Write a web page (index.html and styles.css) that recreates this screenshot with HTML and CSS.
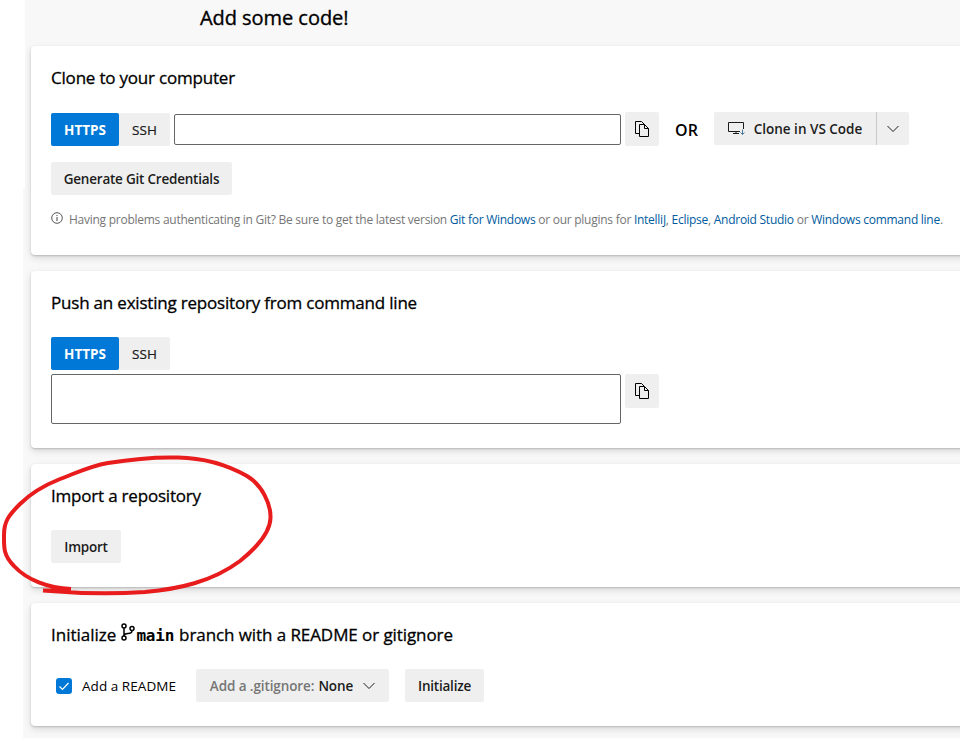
FILE: index.html
```html
<!DOCTYPE html>
<html lang="en">
<head>
<meta charset="utf-8">
<title>Add some code!</title>
<link rel="stylesheet" href="styles.css">
</head>
<body>
<svg class="defs" width="0" height="0">
  <symbol id="copy" viewBox="0 0 16 16"><path d="M5 12.500H1.500V.5h6l3 3M5.500 3.500h5l4 4v8h-9zM10.500 3.500v4h4" fill="none" stroke="currentColor" stroke-width="1"/></symbol>
  <symbol id="chevron" viewBox="0 0 12 8"><path d="M.5 1l5.500 5.500L11.500 1" fill="none" stroke="currentColor" stroke-width="1"/></symbol>
</svg>
<main class="page">
  <h1 class="title"><span>Add some code!</span></h1>
  <section class="card clone">
    <h2><span>Clone to your computer</span></h2>
    <div class="row">
      <div class="toggle"><button class="on">HTTPS</button><button>SSH</button></div>
      <div class="field"></div>
      <button class="btn copy" aria-label="Copy"><svg width="16" height="16"><use href="#copy"/></svg></button>
      <strong class="or">OR</strong>
      <div class="split">
        <button class="btn vs"><svg width="17" height="14" viewBox="0 0 17 14" fill="none" stroke="currentColor"><path d="M12 9.500H.5v-9h15V7M5 11.500h6M8 9.500v2"/><path class="arrow" d="M14.500 7.500v5M12.500 10.500l2 2 2-2"/></svg><span>Clone in VS Code</span></button>
        <button class="btn more" aria-label="More"><svg width="12" height="8"><use href="#chevron"/></svg></button>
      </div>
    </div>
    <button class="btn generate">Generate Git Credentials</button>
    <p class="hint"><svg width="12" height="12" viewBox="0 0 12 12" fill="none" stroke="currentColor"><circle cx="6" cy="6" r="5.300" stroke-width=".9"/><path d="M6 5v4M6 3v1"/></svg><span>Having problems authenticating in Git? Be sure to get the latest version <a>Git for Windows</a> or our plugins for <a>IntelliJ</a>, <a>Eclipse</a>, <a>Android Studio</a> or <a>Windows command line</a>.</span></p>
  </section>
  <section class="card push">
    <h2><span>Push an existing repository from command line</span></h2>
    <div class="toggle"><button class="on">HTTPS</button><button>SSH</button></div>
    <div class="row">
      <div class="field tall"></div>
      <button class="btn copy" aria-label="Copy"><svg width="16" height="16"><use href="#copy"/></svg></button>
    </div>
  </section>
  <section class="card import">
    <h2><span>Import a repository</span></h2>
    <button class="btn import-btn">Import</button>
  </section>
  <section class="card init">
    <h2><span class="w1">Initialize</span><svg class="branch" width="14" height="18" viewBox="0 0 14 18" fill="none" stroke="currentColor" stroke-width="1.500"><circle cx="3" cy="3" r="2"/><circle cx="3" cy="15" r="2"/><circle cx="11" cy="5.500" r="2"/><path d="M3 5v8M11 7.500c0 3-2 3-4 3-2 0-4 .5-4 2.500"/></svg><code>main</code><span class="w2">branch with a README or gitignore</span></h2>
    <div class="row">
      <span class="check"><svg width="16" height="16" viewBox="0 0 16 16"><path d="M3.500 8.500l3 3 6-6.500" fill="none" stroke="#fff" stroke-width="1.200"/></svg></span>
      <span class="readme">Add a README</span>
      <button class="btn ignore"><span class="muted">Add a .gitignore:</span><span class="none">None</span><svg width="12" height="8"><use href="#chevron"/></svg></button>
      <button class="btn init-btn">Initialize</button>
    </div>
  </section>
  <svg class="ink" width="280" height="150" viewBox="0 450 280 150" aria-hidden="true"><path d="M43 590.500L71 590M71 589C48 588 27 580 14 566C3 555 4 547 4 535C4 521 9 515 20 504C32 492 45 485 60 479C76 473 90 466 108 463C132 459 160 457 178 457.500C207 458 231 467 247 476C262 485 271 504 270.500 518C270 534 255 549 240 561C212 582 178 589 145 592C112 594 72 593 43 590.500"/></svg>
</main>
</body>
</html>
```

FILE: styles.css
```css
* { box-sizing: border-box; }
body { margin: 0; background: #fff; color: #000; overflow: hidden; font: 14px/20px "Open Sans", "Noto Sans", sans-serif; }
.defs { position: absolute; }
svg { flex: none; }
.page { position: relative; width: 960px; height: 738px; overflow: hidden; padding-left: 31px;
  background: linear-gradient(#f8f8f8, #f8f8f8) 25px 0 / 100% 189px no-repeat, linear-gradient(#f8f8f8, #f8f8f8) 23px 189px / 100% 100% no-repeat; }
.title { margin: 0; height: 46px; padding: 4px 0 0 169px; font-size: 20px; line-height: 27px; font-weight: 500; letter-spacing: -.05px; white-space: nowrap; -webkit-text-stroke: .35px; }
.card { width: 960px; margin-bottom: 16px; padding: 20px; background: #fff; border-radius: 4px; box-shadow: 0 3px 7px rgba(0,0,0,.13), 0 1px 2px rgba(0,0,0,.18); }
.clone { height: 209px; }
.push { height: 177px; }
.import, .init { height: 123px; }
h2 { display: flex; margin: 0 0 22px; height: 24px; font-size: 17px; line-height: 24px; font-weight: 500; letter-spacing: -.2px; white-space: nowrap; -webkit-text-stroke: .3px; }
.row { display: flex; align-items: center; }
button { font: inherit; border: 0; padding: 0; color: #1c1c1c; }
.toggle { display: flex; width: 119px; height: 33px; background: #efefef; border-radius: 2px; }
.toggle button { flex: 1; background: none; font-weight: 500; font-size: 13.500px; -webkit-text-stroke: .2px; }
.toggle .on { flex: 0 0 68px; background: #0078d7; color: #fff; border-radius: 2px; font-weight: 700; -webkit-text-stroke: 0; }
.field { width: 447px; height: 31px; margin-left: 4px; border: 1px solid #666; border-radius: 2px; }
.tall { width: 570px; height: 50px; margin: 0; }
.btn { display: flex; align-items: center; justify-content: center; height: 33px; background: #efefef; border-radius: 2px; font-size: 13.500px; font-weight: 600; letter-spacing: -.22px; white-space: nowrap; }
.clone .row { height: 34px; }
.clone .toggle { margin-top: 1px; }
.clone .field { margin-top: 1px; }
.copy { width: 34px; height: 34px; margin-left: 4px; color: #000; }
.or { width: 55px; text-align: center; font-size: 16px; font-weight: 600; padding-top: 2px; }
.split { display: flex; align-self: flex-start; }
.vs { width: 162px; gap: 9px; border-radius: 2px 0 0 2px; letter-spacing: 0; }
.arrow { stroke: #47799f; }
.more { width: 33px; border-left: 1px solid #c8c8c8; border-radius: 0 2px 2px 0; }
.generate { width: 181px; margin-top: 16px; }
.hint { display: flex; gap: 6px; margin: 15px 0 0; font-size: 12px; line-height: 19px; color: #767676; white-space: nowrap; letter-spacing: -.26px; }
.hint svg { margin-top: 2px; color: #444; }
.hint a { color: #005a9e; }
.push .row { align-items: flex-start; margin-top: 4px; }
.import-btn { width: 70px; }
.w1 { letter-spacing: 0; }
.branch { margin: 0 1px 0 5px; }
code { font: bold 16px/26px "DejaVu Sans Mono", monospace; letter-spacing: -.2px; margin-right: 5px; -webkit-text-stroke: 0; }
.w2 { letter-spacing: -.08px; }
.check { display: flex; margin-left: 5px; width: 16px; height: 16px; border-radius: 3px; background: #0078d7; }
.readme { width: 114px; margin-left: 10px; font-size: 13.500px; letter-spacing: .05px; white-space: nowrap; }
.ignore { width: 193px; letter-spacing: -.1px; }
.muted { color: #767676; }
.none { margin: 0 10px 0 4px; }
.init-btn { width: 79px; margin-left: 16px; }
.ink { position: absolute; left: 0; top: 450px; }
.ink path { fill: none; stroke: #e81c1c; stroke-width: 4; stroke-linejoin: round; }
```
